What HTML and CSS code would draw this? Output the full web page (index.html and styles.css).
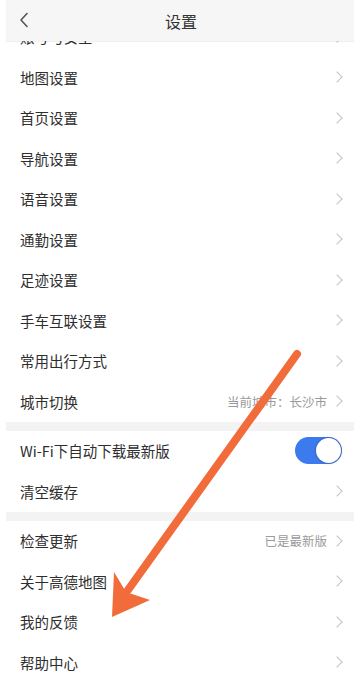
FILE: index.html
```html
<!DOCTYPE html>
<html lang="zh-CN">
<head>
<meta charset="utf-8">
<title>设置</title>
<link rel="stylesheet" href="styles.css">
</head>
<body>
<div class="page">
  <header class="header">
    <svg class="back" width="10" height="16" viewBox="0 0 10 16"><path d="M8 1.5 L2 8 L8 14.5" fill="none" stroke="#555" stroke-width="1.6" stroke-linecap="round" stroke-linejoin="round"/></svg>
    <div class="title">设置</div>
  </header>

  <div class="list">
    <div class="group">
      <div class="row"><span class="label">账号与安全</span><span class="chev"></span></div>
      <div class="row"><span class="label">地图设置</span><span class="chev"></span></div>
      <div class="row"><span class="label">首页设置</span><span class="chev"></span></div>
      <div class="row"><span class="label">导航设置</span><span class="chev"></span></div>
      <div class="row"><span class="label">语音设置</span><span class="chev"></span></div>
      <div class="row"><span class="label">通勤设置</span><span class="chev"></span></div>
      <div class="row"><span class="label">足迹设置</span><span class="chev"></span></div>
      <div class="row"><span class="label">手车互联设置</span><span class="chev"></span></div>
      <div class="row"><span class="label">常用出行方式</span><span class="chev"></span></div>
      <div class="row"><span class="label">城市切换</span><span class="value">当前城市：长沙市</span><span class="chev"></span></div>
    </div>
    <div class="band"></div>
    <div class="group">
      <div class="row"><span class="label">Wi-Fi下自动下载最新版</span><span class="toggle"><span class="knob"></span></span></div>
      <div class="row"><span class="label">清空缓存</span><span class="chev"></span></div>
    </div>
    <div class="band"></div>
    <div class="group">
      <div class="row"><span class="label">检查更新</span><span class="value">已是最新版</span><span class="chev"></span></div>
      <div class="row"><span class="label">关于高德地图</span><span class="chev"></span></div>
      <div class="row"><span class="label">我的反馈</span><span class="chev"></span></div>
      <div class="row"><span class="label">帮助中心</span><span class="chev"></span></div>
    </div>
  </div>

  <svg class="arrow" width="354" height="675" viewBox="0 0 354 675">
    <line x1="297" y1="354" x2="128" y2="590" stroke="#f26b3a" stroke-width="8" stroke-linecap="round"/>
    <polygon points="112,617 114,572 126,592 150,600" fill="#f26b3a"/>
  </svg>
</div>
</body>
</html>
```

FILE: styles.css
```css
* { box-sizing: border-box; }
html, body {
  margin: 0;
  padding: 0;
  background: #ffffff;
}
body {
  font-family: "Noto Sans CJK SC", "Noto Sans", sans-serif;
  color: #333333;
  overflow: hidden;
}
.page {
  position: relative;
  width: 354px;
  height: 675px;
  overflow: hidden;
}
.header {
  position: absolute;
  top: 0;
  left: 6px;
  right: 0;
  height: 41px;
  background: #f6f6f6;
  box-shadow: 0 1px 1px rgba(0,0,0,0.06);
  display: flex;
  align-items: center;
  justify-content: center;
  z-index: 2;
}
.back {
  position: absolute;
  left: 13px;
  top: 12px;
}
.title {
  font-size: 16px;
  color: #333;
  margin-left: 2px;
}
.list {
  padding-top: 16.5px;
}
.row {
  height: 40.5px;
  display: flex;
  align-items: center;
  padding: 0 11px 0 20px;
}
.label {
  flex: 1;
  font-size: 14.5px;
  color: #2e2e2e;
}
.value {
  font-size: 12.5px;
  color: #9a9a9a;
  margin-right: 6px;
}
.chev {
  width: 8px;
  height: 8px;
  border-top: 1.3px solid #c4c4c4;
  border-right: 1.3px solid #c4c4c4;
  transform: rotate(45deg);
  margin-right: 2px;
}
.band {
  height: 9px;
  margin-left: 6px;
  background: #f3f3f3;
}
.toggle {
  width: 47px;
  height: 27px;
  border-radius: 14px;
  background: #3b7bee;
  position: relative;
  margin-right: 1px;
}
.knob {
  position: absolute;
  right: 1px;
  top: 1px;
  width: 25px;
  height: 25px;
  border-radius: 50%;
  background: #fff;
  box-shadow: 0 0 1px 1px rgba(60,60,90,0.35);
}
.arrow {
  position: absolute;
  top: 0;
  left: 0;
  z-index: 3;
  pointer-events: none;
}
```
